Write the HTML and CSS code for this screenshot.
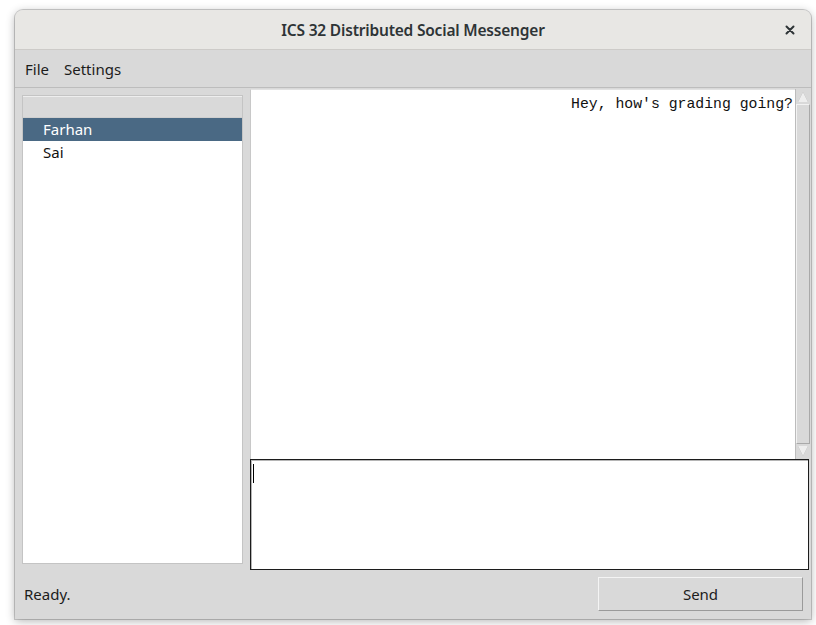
FILE: index.html
```html
<!DOCTYPE html>
<html lang="en">
<head>
<meta charset="utf-8">
<title>ICS 32 Distributed Social Messenger</title>
<link rel="stylesheet" href="styles.css">
</head>
<body>
<div class="window">
  <header class="titlebar">
    <span class="title">ICS 32 Distributed Social Messenger</span>
    <button class="close" aria-label="Close">
      <svg width="10" height="10" viewBox="0 0 10 10"><path d="M1.5 1.5 L8.5 8.5 M8.5 1.5 L1.5 8.5" stroke="#2e3436" stroke-width="2" stroke-linecap="round"/></svg>
    </button>
  </header>
  <nav class="menubar">
    <span class="menu-item">File</span>
    <span class="menu-item">Settings</span>
  </nav>
  <main class="content">
    <section class="contacts">
      <div class="contacts-head"></div>
      <ul class="contact-list">
        <li class="contact selected">Farhan</li>
        <li class="contact">Sai</li>
      </ul>
    </section>
    <section class="conversation">
      <div class="chat">
        <div class="messages">
          <p class="msg msg-sent">Hey, how's grading going?</p>
        </div>
        <div class="scrollbar">
          <div class="arrow arrow-up"></div>
          <div class="thumb"></div>
          <div class="arrow arrow-down"></div>
        </div>
      </div>
      <div class="compose"><span class="caret"></span></div>
    </section>
  </main>
  <footer class="statusbar">
    <span class="status">Ready.</span>
    <button class="send">Send</button>
  </footer>
</div>
</body>
</html>
```

FILE: styles.css
```css
* {
  box-sizing: border-box;
}

html, body {
  margin: 0;
  padding: 0;
  background: #ffffff;
}

body {
  width: 816px;
  height: 625px;
  overflow: hidden;
  font-family: "Noto Sans", "DejaVu Sans", sans-serif;
  color: #1c1c1c;
}

.window {
  margin: 10px 0 0 15px;
  width: 796px;
  height: 609px;
  display: flex;
  flex-direction: column;
  background: #d9d9d9;
  border-radius: 8px 8px 0 0;
  box-shadow: 0 0 0 1px rgba(0, 0, 0, 0.18), 0 2px 10px rgba(0, 0, 0, 0.3);
}

/* window decoration */
.titlebar {
  height: 40px;
  flex: none;
  display: flex;
  align-items: center;
  justify-content: center;
  position: relative;
  background: #e8e7e4;
  border-bottom: 1px solid #cdcbc8;
  border-radius: 8px 8px 0 0;
}

.title {
  font-size: 15.5px;
  font-weight: 600;
  color: #2e3436;
  letter-spacing: -0.2px;
}

.close {
  position: absolute;
  right: 16px;
  top: 15px;
  width: 10px;
  height: 10px;
  padding: 0;
  border: 0;
  background: none;
  display: flex;
}

/* menu */
.menubar {
  height: 38px;
  flex: none;
  display: flex;
  align-items: center;
  gap: 15px;
  padding-left: 10px;
  border-bottom: 1px solid #bdbdbd;
  font-size: 15px;
}

/* main area */
.content {
  flex: 1;
  display: flex;
  gap: 7px;
  min-height: 0;
}

.contacts {
  width: 221px;
  margin: 7px 0 6px 7px;
  background: #ffffff;
  border: 1px solid #c4c4c4;
  display: flex;
  flex-direction: column;
}

.contacts-head {
  height: 22px;
  flex: none;
  background: #d9d9d9;
  border-top: 1px solid #eeeeee;
  border-bottom: 1px solid #cfcfcf;
}

.contact-list {
  list-style: none;
  margin: 0;
  padding: 0;
}

.contact {
  height: 23px;
  line-height: 23px;
  padding-left: 20px;
  font-size: 15px;
  color: #111;
}

.contact.selected {
  background: #4a6984;
  color: #ffffff;
}

.conversation {
  flex: 1;
  display: flex;
  flex-direction: column;
  margin: 1px 1px 0 0;
}

.chat {
  flex: 1;
  display: flex;
  min-height: 0;
}

.messages {
  flex: 1;
  background: #ffffff;
  border-left: 1px solid #c8c8c8;
  border-top: 1px solid #e2e2e2;
  padding: 4px 2px 0 0;
}

.msg {
  margin: 0;
  font-family: "Liberation Mono", "DejaVu Sans Mono", monospace;
  font-size: 14.8px;
  line-height: 20px;
  color: #111;
}

.msg-sent {
  text-align: right;
}

.scrollbar {
  width: 15px;
  flex: none;
  display: flex;
  flex-direction: column;
  background: #c3c3c3;
  border-left: 1px solid #bcbcbc;
}

.arrow {
  height: 15px;
  flex: none;
  background: #d9d9d9;
  position: relative;
}

.arrow::after {
  content: "";
  position: absolute;
  left: 2px;
  width: 0;
  height: 0;
  border-left: 5px solid transparent;
  border-right: 5px solid transparent;
}

.arrow-up::after {
  top: 3px;
  border-bottom: 10px solid #eeeeee;
  filter: drop-shadow(0 0 0.7px #9a9a9a);
}

.arrow-down::after {
  top: 2px;
  border-top: 10px solid #eeeeee;
  filter: drop-shadow(0 0 0.7px #9a9a9a);
}

.thumb {
  flex: 1;
  background: #d9d9d9;
  border-left: 1px solid #f2f2f2;
  border-top: 1px solid #f2f2f2;
  border-right: 1px solid #a9a9a9;
  border-bottom: 1px solid #a9a9a9;
}

.compose {
  height: 111px;
  flex: none;
  margin-right: 1px;
  background: #ffffff;
  border: 1px solid #1c1c1c;
  box-shadow: inset 1px 1px 0 #b5b5b5;
  padding: 4px 0 0 2px;
}

.caret {
  display: block;
  width: 1px;
  height: 19px;
  background: #000;
}

/* bottom row */
.statusbar {
  height: 49px;
  flex: none;
  display: flex;
  align-items: center;
  justify-content: space-between;
  padding: 0 8px 1px 9px;
}

.status {
  font-size: 15px;
  color: #1c1c1c;
}

.send {
  width: 205px;
  height: 34px;
  font-family: "Noto Sans", "DejaVu Sans", sans-serif;
  font-size: 15px;
  color: #1c1c1c;
  background: #d9d9d9;
  border: 1px solid;
  border-color: #f4f4f4 #9a9a9a #9a9a9a #f4f4f4;
  padding: 0;
}
```
